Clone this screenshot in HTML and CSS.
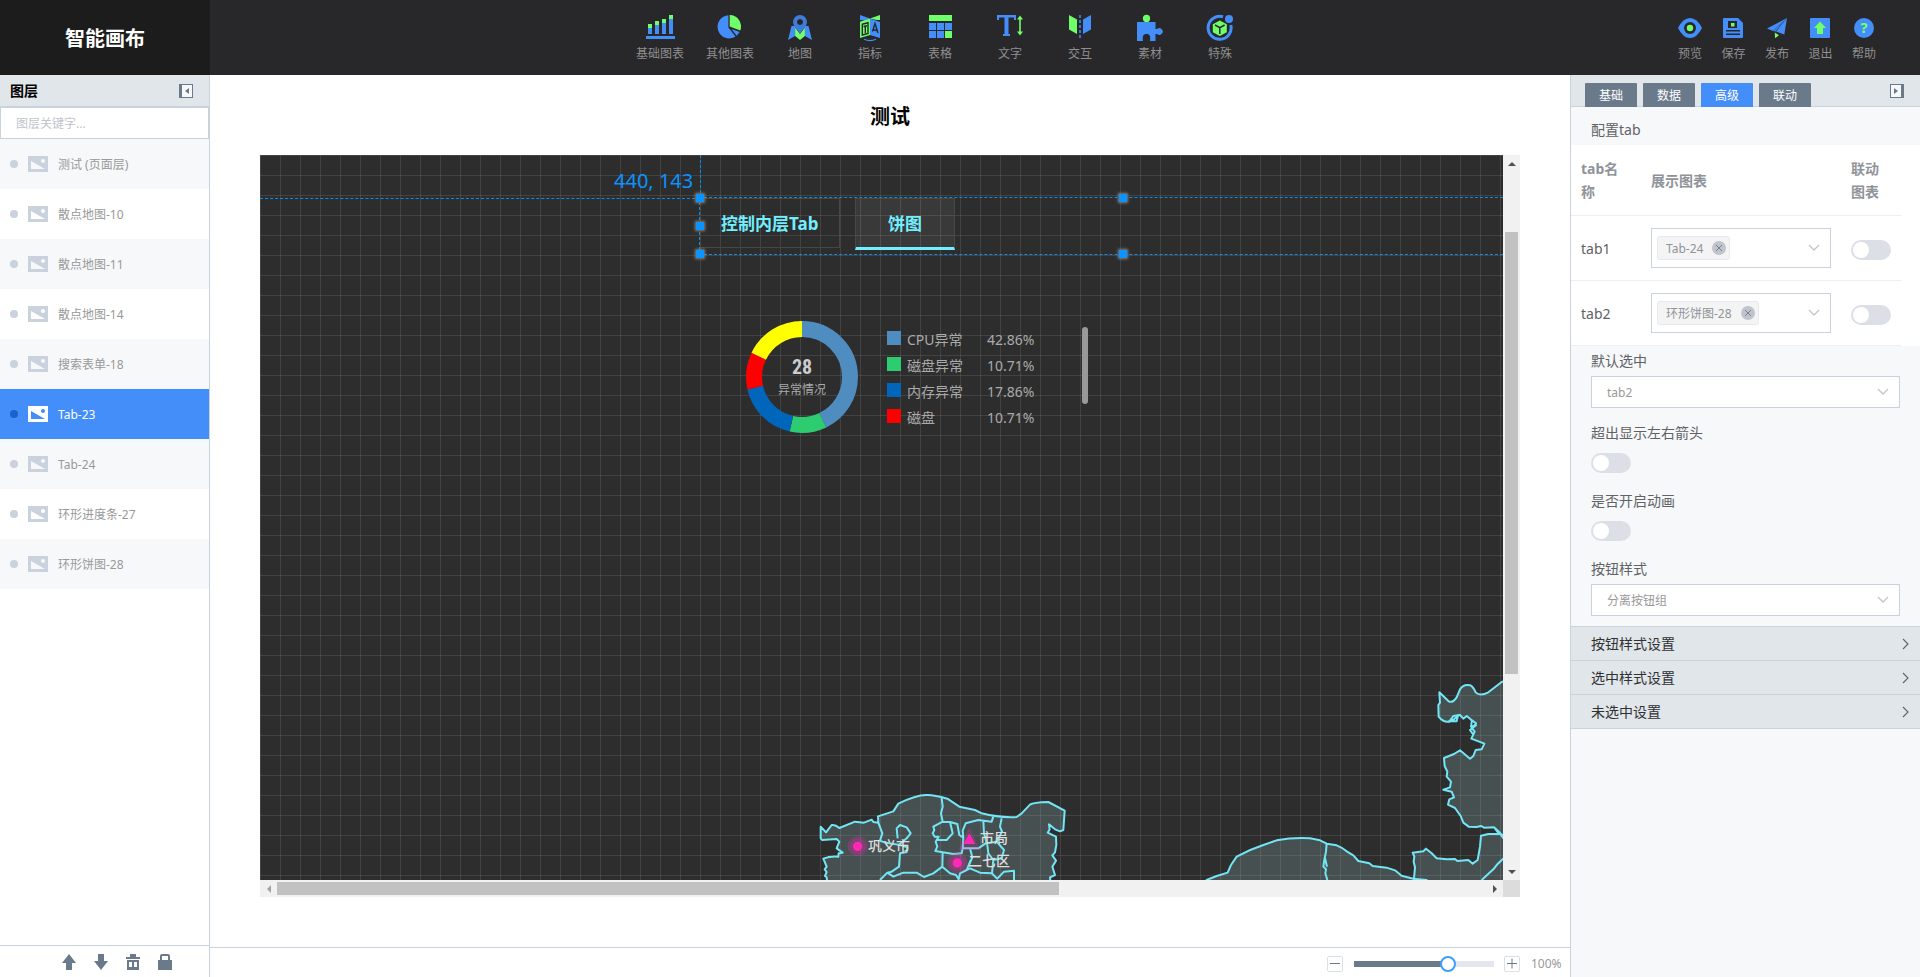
FILE: index.html
```html
<!DOCTYPE html>
<html lang="zh-CN">
<head>
<meta charset="utf-8">
<title>智能画布</title>
<link rel="stylesheet" href="styles.css">
</head>
<body>
<svg class="defs" aria-hidden="true">
  <symbol id="i-image" viewBox="0 0 20 16"><path fill-rule="evenodd" fill="currentColor" d="M0 0h20v16H0zM3 5v8h14zM15 3a2 2 0 1 0 .01 0z"/></symbol>
  <symbol id="i-down" viewBox="0 0 12 8"><path d="M1 1l5 5 5-5" fill="none" stroke="#c0c4cc" stroke-width="1.3"/></symbol>
  <symbol id="i-right" viewBox="0 0 8 12"><path d="M1 1l5 5-5 5" fill="none" stroke="#606266" stroke-width="1.1"/></symbol>
</svg>
<div class="app">
  <header class="top">
    <h1 class="logo">智能画布</h1>
    <nav class="tools">
      <button class="tool"><svg viewBox="0 0 30 28"><path fill="#448ef9" d="M3 14h4v6H3zM10 11h4v9h-4zM17 9h4v11h-4zM24 5h4v15h-4zM1 22h29v3H1z"/><path fill="#70ff6b" d="M3 10h4v4H3zM10 7h4v4h-4zM17 5h4v4h-4zM24 1h4v4h-4z"/></svg>基础图表</button>
      <button class="tool"><svg viewBox="0 0 30 28"><path fill="#448ef9" d="M13.400 1.200A11.600 11.600 0 1 0 20.500 22.500L13.400 13.500z"/><path fill="#70ff6b" d="M14.700 1A11.500 11.500 0 0 1 25.300 16.500L14.700 12.600z"/><path fill="#448ef9" d="M16.500 15l8.200 3-3 3.800z"/></svg>其他图表</button>
      <button class="tool"><svg viewBox="0 0 30 28"><path fill="#448ef9" d="M6.500 12h3.600v10L3 26zM23.500 12h-3.600v10l7.100 4z"/><path fill="#70ff6b" d="M10.100 13.500L15 20l4.900-6.500V22L15 26l-4.900-4z"/><path fill="#3d7cd9" fill-rule="evenodd" d="M15 1a7 7 0 0 1 7 7c0 4-4 7-7 12-3-5-7-8-7-12a7 7 0 0 1 7-7zM15 5a3 3 0 1 0 .01 0z"/></svg>地图</button>
      <button class="tool"><svg viewBox="0 0 30 28"><path fill="#448ef9" d="M5 1l10 3.500-5 2L5 6zM15 4.500L25 8v16L15 21z"/><path fill="#70ff6b" d="M25 1L15 4.500l7 1.500 3 0zM5 7.700l10-3.200V21L5 24z"/><path fill="none" stroke="#28282a" stroke-width="1.400" d="M7.300 10.200l5.700-1.500v10.800l-5.700 1.500zM8.500 12.500l3.500-.8M10.300 12v7M17.500 17.500l2.500-8 3 9.500M18.500 15.700l3.500.8"/><path fill="none" stroke="#448ef9" stroke-width="1.200" d="M9 25.300q6 2.600 12 0"/></svg>指标</button>
      <button class="tool"><svg viewBox="0 0 30 28"><path fill="#70ff6b" d="M4 1h23v6H4zM20 17h7v7h-7z"/><path fill="#448ef9" d="M4 9h7v7H4zM12 9h7v7h-7zM20 9h7v7h-7zM4 17h7v7H4zM12 17h7v7h-7z"/></svg>表格</button>
      <button class="tool"><svg viewBox="0 0 30 28"><path fill="#448ef9" d="M2 1h19v5h-2V3.500h-5.500V20H15v2H8v-2h1.500V3.500H4V6H2z"/><path fill="#70ff6b" d="M25 1.500l3 4h-2.200V17.500H28l-3 4-3-4h2.200V5.500H22z"/></svg>文字</button>
      <button class="tool"><svg viewBox="0 0 30 28"><path fill="#70ff6b" d="M4 1l8 4.500V20l-8-4.500z"/><path fill="#448ef9" d="M26 1l-8 4.500V20l8-4.500z"/><path stroke="#448ef9" stroke-width="1.500" stroke-dasharray="3 2" d="M15 1v25"/></svg>交互</button>
      <button class="tool"><svg viewBox="0 0 30 28"><ellipse cx="11.500" cy="4.500" rx="3.600" ry="3.700" fill="#70ff6b"/><path fill="#448ef9" d="M2 8h18.500v7h1.500a3.400 3.400 0 1 1 0 5h-1.500v7H15c1-6-1-7-3.500-7S7 21 8 27H2z"/></svg>素材</button>
      <button class="tool"><svg viewBox="0 0 30 28"><path fill="none" stroke="#448ef9" stroke-width="3" d="M18 2.800a11.500 11.500 0 1 0 7.800 8.200"/><circle cx="24" cy="5" r="4" fill="#448ef9"/><path fill="#70ff6b" d="M14.800 6.500l7 3.700v8l-7 3.900-7-3.900v-8z"/><path fill="none" stroke="#28282a" stroke-width="1.500" d="M10 11l4.800 2.700 4.800-2.700M14.800 13.500V20"/></svg>特殊</button>
    </nav>
    <div class="actions">
      <button class="tool"><svg class="s24" viewBox="0 0 24 28"><path fill="#448ef9" d="M0 14Q5 4 12 4t12 10Q19 24 12 24T0 14z"/><circle cx="12" cy="14" r="6" fill="#28282a"/><circle cx="12" cy="14" r="3.200" fill="#70ff6b"/></svg>预览</button>
      <button class="tool"><svg class="s24" viewBox="0 0 24 28"><path fill="#448ef9" d="M3 4h14l5 5v14q0 1-1 1H3q-1 0-1-1V5q0-1 1-1z"/><path fill="#28282a" d="M7 7h9v7H7zM5 16h14v1.500H5zM5 19.500h14V21H5z"/><path fill="#70ff6b" d="M10 9h3.500v3.500H10z"/></svg>保存</button>
      <button class="tool"><svg class="s24" viewBox="0 0 24 28"><path fill="#448ef9" d="M22 4L2 14.500 8 17zM22 4l-2.700 16.500L11 17.400z"/><path fill="#448ef9" d="M22 4L8.500 17l1.500.7z"/><path fill="#70ff6b" d="M9.800 18.500l4.200 2.700-4 3z"/></svg>发布</button>
      <button class="tool"><svg class="s24" viewBox="0 0 24 28"><rect x="2" y="4" width="20" height="20" rx="1" fill="#448ef9"/><path fill="#70ff6b" d="M12 7.500l6 6.500h-3v6H9v-6H6z"/></svg>退出</button>
      <button class="tool"><svg class="s24" viewBox="0 0 24 28"><circle cx="12" cy="14" r="10" fill="#448ef9"/><text class="qmark" x="12" y="19" text-anchor="middle">?</text></svg>帮助</button>
    </div>
  </header>

  <aside class="layers">
    <div class="layers-head">图层
      <button class="fold" aria-label="收起"><svg viewBox="0 0 14 14"><path fill="#f7f8fa" d="M1 1h12v12H1z"/><path fill="#6b7a8b" fill-rule="evenodd" d="M0 0h14v14H0zM3 1v12h10V1z"/><path fill="#6b7a8b" d="M10 4v6L6 7z"/></svg></button>
    </div>
    <input class="search" type="text" placeholder="图层关键字..." aria-label="图层关键字">
    <ul class="layer-list">
      <li class="layer"><i class="dot"></i><svg><use href="#i-image"/></svg><span>测试 (页面层)</span></li>
      <li class="layer"><i class="dot"></i><svg><use href="#i-image"/></svg><span>散点地图-10</span></li>
      <li class="layer"><i class="dot"></i><svg><use href="#i-image"/></svg><span>散点地图-11</span></li>
      <li class="layer"><i class="dot"></i><svg><use href="#i-image"/></svg><span>散点地图-14</span></li>
      <li class="layer"><i class="dot"></i><svg><use href="#i-image"/></svg><span>搜索表单-18</span></li>
      <li class="layer on"><i class="dot"></i><svg><use href="#i-image"/></svg><span>Tab-23</span></li>
      <li class="layer"><i class="dot"></i><svg><use href="#i-image"/></svg><span>Tab-24</span></li>
      <li class="layer"><i class="dot"></i><svg><use href="#i-image"/></svg><span>环形进度条-27</span></li>
      <li class="layer"><i class="dot"></i><svg><use href="#i-image"/></svg><span>环形饼图-28</span></li>
    </ul>
    <div class="layer-tools">
      <button aria-label="上移"><svg viewBox="0 0 14 16"><path d="M7 0l7 9h-4v7H4V9H0z"/></svg></button>
      <button aria-label="下移"><svg viewBox="0 0 14 16"><path d="M7 16l7-9h-4V0H4v7H0z"/></svg></button>
      <button aria-label="删除"><svg viewBox="0 0 14 16"><path fill-rule="evenodd" d="M4 0h6v3h4v2H0V3h4zM1 6h12v10H1zM3 8v5h3V8zM8 8v5h3V8z"/></svg></button>
      <button aria-label="锁定"><svg viewBox="0 0 14 16"><path fill-rule="evenodd" d="M2 6V2q0-2 2-2h6q2 0 2 2v4h2v10H0V6zM4 6h6V2H4z"/></svg></button>
    </div>
  </aside>

  <main class="stage">
    <h2 class="stage-title">测试</h2>
    <div class="viewport">
      <div class="canvas">
        <svg class="map" viewBox="0 0 1243 725">
          <g transform="translate(540 615) scale(.33333)" class="region">
            <path class="land" d="M62 170L78 187 95 165Q106 163 118 174L165 155 192 158 215 149 220 156 235 158 234 139 280 124 295 101Q350 74 380 75 400 74 442 86L478 110 525 120 545 130Q600 144 650 141L665 130 690 104Q700 97 745 96L794 122 790 180 780 184 765 178 747 163 749 178 743 188 768 200 769 225 765 247 757 256 768 272 757 290 765 315 750 322 752 340H82L80 322 75 318 80 306 74 298 80 290 70 266Q90 258 115 260L116 250 128 248 110 235 118 215 110 207 66 210 62 205z"/>
            <path d="M425 83L428 110 423 130 428 155 400 170 403 180 398 190 404 200 416 200 407 215 412 230 406 243 428 247 427 290 400 310 372 321 350 308 310 308 280 320 262 308 240 330M235 158L247 190 240 212Q255 220 297 224L320 205 332 190 320 172 300 165 290 175 293 205M297 224L322 232 320 246 300 250 297 290 275 305 262 308M428 155L450 156 458 190 440 210 412 210M450 156L472 162 478 195 490 203 488 182 497 160 535 150 575 155 580 140M490 203L488 235 485 250 460 252 428 247M488 235L535 235 560 218 552 190 550 152M560 220L590 215 612 240 605 265 580 270 565 250 562 225M605 145L600 170 606 185 590 215M427 290L450 310 468 315 476 328 480 310 510 295 540 308 575 310 592 326 612 305 642 302V330M510 235L517 262 505 290M580 270L576 310M480 310L500 300 512 270"/>
            <circle class="halo" cx="173" cy="229" r="29"/><circle class="halo" cx="173" cy="229" r="22"/><circle class="pin" cx="173" cy="229" r="14"/>
            <circle class="halo" cx="472" cy="279" r="29"/><circle class="halo" cx="472" cy="279" r="22"/><circle class="pin" cx="472" cy="279" r="14"/>
            <path class="halo" d="M508 176l30 63h-60z"/><path class="pin" d="M508 190l18 32h-36z"/>
          </g>
          <text x="608" y="696">巩义市</text><text x="720" y="688">市局</text><text x="708" y="711">二七区</text>
          <g transform="translate(920 505) scale(.33333)" class="region">
            <path class="land" d="M80 660L110 648 143 638 153 615 170 590Q210 568 250 555L290 541Q340 532 390 535L420 541 440 551 470 556Q490 564 500 574L520 586 535 603 568 610 578 618 620 623 645 631 665 647 700 656 740 660V700H80z"/>
            <path d="M440 551L438 575 433 600 430 620 438 628 436 640 442 660M434 590L441 620"/>
            <path class="land" d="M702 700V655L705 622 701 605 703 590 698 578 730 574 738 566 755 580 770 595 800 598 825 597 832 603 865 600 878 611 893 600 900 560 903 527 925 522 960 522 980 530V700z"/>
            <path class="land" d="M980 60L965 66 925 97Q900 110 887 97 878 78 870 76 850 72 840 88L830 112Q818 130 806 124L778 97 780 128 775 135 776 170Q790 188 808 185L820 168 840 165 850 176 860 168 872 178 888 190 876 205 884 215 874 236 913 251 905 268 887 270 880 288 870 296 840 271 822 282 792 294 794 318 802 335 800 350 813 365 810 382 790 389 815 395 822 412 808 418 804 434 825 444 842 468 850 488 866 500 890 501 903 498 912 503 942 502 960 518 966 530 980 545z"/>
            <path d="M805 184L830 184 834 166 820 180 812 178M876 180L873 200 888 196 870 210 880 224M945 505L956 520M905 660L940 628Q955 606 980 588"/>
          </g>
        </svg>
        <div class="guide-h"></div><div class="guide-v"></div>
        <span class="coord">440, 143</span>
        <div class="widget-tabs">
          <button class="wtab">控制内层Tab</button><button class="wtab sel">饼图</button>
          <i class="handle tl"></i><i class="handle ml"></i><i class="handle bl"></i><i class="handle tc"></i><i class="handle bc"></i>
        </div>
        <div class="donut-widget">
          <div class="donut">
            <svg viewBox="0 0 114 114">
              <g fill="none" stroke-width="16" transform="rotate(-90 57 57)">
                <circle cx="57" cy="57" r="48" pathLength="100" stroke="#4f8dc1" stroke-dasharray="42.860 100"/>
                <circle cx="57" cy="57" r="48" pathLength="100" stroke="#2ecc71" stroke-dasharray="10.710 100" stroke-dashoffset="-42.860"/>
                <circle cx="57" cy="57" r="48" pathLength="100" stroke="#0066bb" stroke-dasharray="17.860 100" stroke-dashoffset="-53.570"/>
                <circle cx="57" cy="57" r="48" pathLength="100" stroke="#ff0000" stroke-dasharray="10.710 100" stroke-dashoffset="-71.430"/>
                <circle cx="57" cy="57" r="48" pathLength="100" stroke="#ffff00" stroke-dasharray="17.860 100" stroke-dashoffset="-82.140"/>
              </g>
            </svg>
            <div class="donut-text"><b>28</b><span>异常情况</span></div>
          </div>
          <ul class="legend">
            <li><i class="c1"></i><span>CPU异常</span>42.86%</li>
            <li><i class="c2"></i><span>磁盘异常</span>10.71%</li>
            <li><i class="c3"></i><span>内存异常</span>17.86%</li>
            <li><i class="c4"></i><span>磁盘</span>10.71%</li>
          </ul>
          <div class="legend-bar"></div>
        </div>
      </div>
      <div class="vbar"><i class="arr up"></i><div class="track"><div class="thumb"></div></div><i class="arr down"></i></div>
      <div class="hbar"><i class="arr left"></i><div class="track"><div class="thumb"></div></div><i class="arr right"></i></div>
      <div class="corner"></div>
    </div>
    <footer class="zoombar">
      <button class="zbtn" aria-label="缩小"><svg viewBox="0 0 14 14"><path d="M2 6.500h10"/></svg></button>
      <input class="zslider" type="range" min="0" max="100" value="69" aria-label="缩放">
      <button class="zbtn" aria-label="放大"><svg viewBox="0 0 14 14"><path d="M2 6.500h10M7 1.500v10"/></svg></button>
      <span class="zval">100%</span>
    </footer>
  </main>

  <aside class="props">
    <div class="props-head">
      <button class="ptab">基础</button><button class="ptab">数据</button><button class="ptab on">高级</button><button class="ptab">联动</button>
      <button class="fold" aria-label="收起"><svg viewBox="0 0 14 14"><path fill="#f7f8fa" d="M1 1h12v12H1z"/><path fill="#6b7a8b" fill-rule="evenodd" d="M0 0h14v14H0zM1 1v12h10V1z"/><path fill="#6b7a8b" d="M4 4v6l4-3z"/></svg></button>
    </div>
    <div class="sub">配置tab</div>
    <div class="table-box">
      <table class="cfg">
        <colgroup><col class="k1"><col class="k2"><col class="k3"></colgroup>
        <thead><tr><th>tab名称</th><th>展示图表</th><th>联动图表</th></tr></thead>
        <tbody>
          <tr><td>tab1</td><td><div class="multi"><span class="tag">Tab-24<button class="x" aria-label="移除"><svg viewBox="0 0 14 14"><path d="M4 4l6 6M10 4l-6 6"/></svg></button></span><svg class="chev"><use href="#i-down"/></svg></div></td><td><input type="checkbox" class="switch" aria-label="tab1 联动图表"></td></tr>
          <tr><td>tab2</td><td><div class="multi"><span class="tag">环形饼图-28<button class="x" aria-label="移除"><svg viewBox="0 0 14 14"><path d="M4 4l6 6M10 4l-6 6"/></svg></button></span><svg class="chev"><use href="#i-down"/></svg></div></td><td><input type="checkbox" class="switch" aria-label="tab2 联动图表"></td></tr>
        </tbody>
      </table>
    </div>
    <div class="form">
      <label for="def">默认选中</label>
      <div class="pick"><select id="def"><option>tab2</option></select><svg class="chev"><use href="#i-down"/></svg></div>
      <label for="arrows">超出显示左右箭头</label>
      <input type="checkbox" class="switch" id="arrows">
      <label for="anim">是否开启动画</label>
      <input type="checkbox" class="switch" id="anim">
      <label for="style">按钮样式</label>
      <div class="pick"><select id="style"><option>分离按钮组</option></select><svg class="chev"><use href="#i-down"/></svg></div>
    </div>
    <div class="acc">
      <button>按钮样式设置<svg><use href="#i-right"/></svg></button>
      <button>选中样式设置<svg><use href="#i-right"/></svg></button>
      <button>未选中设置<svg><use href="#i-right"/></svg></button>
    </div>
  </aside>
</div>
</body>
</html>
```

FILE: styles.css
```css
* { box-sizing: border-box; }
body { margin: 0; font: 14px/20px "Noto Sans", "Noto Sans CJK SC", sans-serif; color: #606266; }
button, input, select { font: inherit; color: inherit; margin: 0; }
button { border: 0; padding: 0; background: none; }
ul { list-style: none; margin: 0; padding: 0; }
h1, h2 { margin: 0; font-size: 20px; }
svg { display: block; }
.defs { position: absolute; width: 0; height: 0; }

.app { display: grid; grid-template: 75px minmax(0, 1fr) / 210px minmax(0, 1fr) 350px; height: 100vh; background: #fff; }

/* top bar */
.top { grid-column: 1 / -1; display: flex; background: #28282a; }
.logo { width: 210px; background: #1c1c1c; color: #fff; text-align: center; line-height: 78px; height: 75px; overflow: hidden; }
.tools { flex: 1; display: flex; justify-content: center; }
.tool { display: flex; flex-direction: column; align-items: center; padding-top: 14px; font-size: 12px; line-height: 16px; color: #8f8f8f; white-space: nowrap; }
.tools .tool { width: 70px; }
.tool svg { width: 30px; height: 28px; margin-bottom: 4px; }
.tool .s24 { width: 24px; }
.actions { width: 250px; display: flex; justify-content: space-between; padding: 0 44px 0 8px; }
.qmark { font: bold 15px "Noto Sans", sans-serif; fill: #70ff6b; }

/* layer panel */
.layers { display: flex; flex-direction: column; border-right: 1px solid #cad2de; }
.layers-head { display: flex; align-items: center; justify-content: space-between; height: 32px; padding: 0 16px 0 10px; background: #e1e6ea; border-bottom: 1px solid #cad2de; color: #000; font-weight: bold; }
.fold svg { width: 14px; height: 14px; }
.search { height: 32px; width: 100%; border: 1px solid #cad2de; padding: 0 15px; font-size: 12px; background: #fff; outline: 0; }
.search::placeholder { color: #c0c4cc; }
.layer-list { flex: 1; }
.layer { display: flex; align-items: center; height: 50px; padding-left: 10px; font-size: 12px; color: #999; }
.layer:nth-child(odd) { background: #f7f8fa; }
.layer svg { width: 20px; height: 16px; margin: 0 10px; color: #cad2de; }
.layer span { padding-top: 2px; }
.dot { width: 8px; height: 8px; border-radius: 50%; background: #cad2de; }
.layer.on { background: #448ef9; color: #fff; }
.layer.on svg { color: #fff; }
.layer.on .dot { background: #1b62d0; }
.layer-tools { display: flex; justify-content: center; gap: 18px; height: 32px; padding: 8px 0 0 25px; border-top: 1px solid #cad2de; }
.layer-tools svg { width: 14px; height: 16px; fill: #6b7a8b; }
.layer-tools button { height: 16px; }

/* stage */
.stage { display: flex; flex-direction: column; min-width: 0; }
.stage-title { height: 80px; color: #000; text-align: center; line-height: 84px; }
.viewport { flex: 1; min-height: 0; display: grid; grid-template: minmax(0, 1fr) 17px / minmax(0, 1fr) 17px; margin: 0 50px 50px; }
.canvas { position: relative; overflow: hidden; background-color: #2d2d2d; background-image: linear-gradient(rgba(255,255,255,.1) 1px, transparent 1px), linear-gradient(90deg, rgba(255,255,255,.1) 1px, transparent 1px); background-size: 20px 20px; }
.map { position: absolute; left: 0; top: 0; width: 1243px; height: 725px; }
.region path { fill: none; stroke: #73e6f5; stroke-width: 6; stroke-linejoin: round; }
.region .land { fill: rgba(168,220,225,.2); }
.region .pin { fill: #ff27b6; stroke: none; }
.region .halo { fill: rgba(255,39,182,.16); stroke: rgba(255,39,182,.4); stroke-width: 2; }
.map text { font-size: 14px; font-weight: 500; fill: #ddd; }
.guide-h, .guide-v { position: absolute; left: 0; top: 43px; width: 440px; border-top: 1px dashed #0c8ce8; }
.guide-v { left: 440px; top: 0; width: 0; height: 43px; border: 0; border-left: 1px dashed #0c8ce8; }
.coord { position: absolute; left: 354px; top: 12px; font-size: 20px; line-height: 28px; color: #0b93ff; }
.widget-tabs { position: absolute; left: 439px; top: 42px; right: -20px; height: 58px; display: flex; align-items: flex-start; gap: 15px; border: 1px dashed #0c8ce8; }
.wtab { height: 50px; min-width: 100px; padding: 2px 21px 0 20px; border: 1px solid #484842; font-size: 17px; font-weight: bold; color: #73eeff; }
.wtab.sel { height: 52px; background: rgba(255,255,255,.06); border-bottom: 3px solid #73eeff; }
.handle { position: absolute; width: 8px; height: 8px; background: #0b93ff; box-shadow: 0 0 3px 1px #8a8078; }
.tl { left: -4px; top: -4px; } .ml { left: -4px; top: 24px; } .bl { left: -4px; top: 52px; }
.tc { left: 419px; top: -4px; } .bc { left: 419px; top: 52px; }
.donut-widget { position: absolute; left: 485px; top: 165px; display: flex; color: #aaa; }
.donut { display: grid; width: 114px; height: 114px; }
.donut > * { grid-area: 1 / 1; }
.donut-text { display: flex; flex-direction: column; align-items: center; justify-content: center; font-size: 12px; line-height: 20px; }
.donut-text b { font: bold 20px/26px "Roboto Condensed", Roboto, sans-serif; color: #ccc; }
.legend { margin: 7px 0 0 28px; }
.legend li { display: flex; height: 26px; line-height: 26px; }
.legend i { width: 14px; height: 14px; margin: 4px 6px 0 0; }
.legend span { width: 80px; }
.c1 { background: #4f8dc1; } .c2 { background: #2ecc71; } .c3 { background: #0066bb; } .c4 { background: #f00; }
.legend-bar { width: 6px; height: 77px; margin: 7px 0 0 48px; border-radius: 3px; background: #999; }

.vbar, .hbar { display: flex; background: #f1f1f1; }
.vbar { flex-direction: column; }
.track { flex: 1; display: flex; }
.vbar .track { flex-direction: column; padding: 0 2px; }
.vbar .track::before { content: ""; flex: 0 0 60px; }
.hbar .track { padding: 2px 0; }
.vbar .thumb { flex: 0 0 64%; background: #c1c1c1; }
.hbar .thumb { flex: 0 0 782px; background: #c1c1c1; }
.arr { display: grid; place-content: center; width: 17px; height: 17px; }
.arr::before { content: ""; border: 4px solid transparent; }
.up::before { border-top: 0; border-bottom-color: #505050; }
.down::before { border-bottom: 0; border-top-color: #505050; }
.left::before { border-left: 0; border-right-color: #a3a3a3; }
.right::before { border-right: 0; border-left-color: #505050; }
.corner { background: #dcdcdc; }

.zoombar { display: flex; align-items: center; justify-content: flex-end; height: 30px; padding: 3px 7px 0 0; border-top: 1px solid #cad2de; font-size: 12px; color: #999; }
.zbtn { width: 16px; height: 16px; border: 1px solid #dcdfe6; border-radius: 2px; }
.zbtn svg { width: 14px; height: 14px; fill: none; stroke: #6b7a8b; }
.zslider { appearance: none; width: 140px; height: 16px; margin: 0 10px 0 11px; background: linear-gradient(90deg, #6b7a8b 66%, #e4e7ed 66%) center / 100% 6px no-repeat; border-radius: 3px; outline: 0; }
.zslider::-webkit-slider-thumb { appearance: none; width: 16px; height: 16px; border: 2px solid #409eff; border-radius: 50%; background: #fff; }
.zval { width: 43px; padding-left: 11px; }

/* properties panel */
.props { background: #f7f8fa; border-left: 1px solid #cad2de; }
.props-head { display: flex; align-items: flex-end; gap: 6px; height: 32px; padding: 0 16px 0 14px; background: linear-gradient(#e1e6ea 31px, #cad2de 31px); }
.ptab { width: 52px; height: 24px; border-radius: 1px 1px 0 0; padding-top: 1px; background: #6b7a8b; color: #fff; font-size: 12px; }
.ptab.on { background: #448ef9; }
.props .fold { margin: 0 0 9px auto; }
.sub { padding: 8px 20px 0; line-height: 30px; }
.table-box { background: #fff; }
.cfg { table-layout: fixed; width: 330px; border-collapse: separate; border-spacing: 0; }
.k1 { width: 70px; } .k2 { width: 200px; } .k3 { width: 60px; }
.cfg th, .cfg td { padding: 12px 10px; border-bottom: 1px solid #ebeef5; text-align: left; line-height: 23px; vertical-align: middle; }
.cfg th { color: #909399; word-break: break-all; }
.multi { display: flex; align-items: center; justify-content: space-between; height: 40px; padding: 0 10px 0 5px; border: 1px solid #cad2de; background: #fff; }
.tag { display: flex; align-items: center; gap: 9px; height: 24px; padding: 0 3px 0 8px; border: 1px solid #e9e9eb; border-radius: 3px; background: #f4f4f5; font-size: 12px; color: #909399; }
.x { width: 14px; height: 14px; border-radius: 50%; background: #c0c4cc; }
.x svg { width: 14px; height: 14px; stroke: #7d8088; }
.chev { width: 12px; height: 8px; }
.switch { appearance: none; display: block; width: 40px; height: 20px; padding: 2px; border-radius: 10px; background: #dcdfe6; }
.switch::before { content: ""; display: block; width: 16px; height: 16px; border-radius: 50%; background: #fff; }
.cfg .switch { margin-top: 3px; }
.form { padding: 0 20px; }
.form label { display: block; line-height: 30px; }
.form .switch { margin: 5px 0 13px; }
.pick { display: grid; align-items: center; margin-bottom: 10px; }
.pick > * { grid-area: 1 / 1; }
.pick .chev { justify-self: end; margin-right: 11px; pointer-events: none; }
.pick select { appearance: none; width: 100%; height: 32px; padding: 1px 15px 0; border: 1px solid #cad2de; border-radius: 0; background: #fff; font-size: 12px; color: #999; }
.acc { border-top: 1px solid #cad2de; }
.acc button { display: flex; align-items: center; justify-content: space-between; width: 100%; height: 34px; padding: 0 10px 0 20px; border-bottom: 1px solid #cad2de; background: #e1e6ea; color: #303133; }
.acc svg { width: 8px; height: 12px; }
```
